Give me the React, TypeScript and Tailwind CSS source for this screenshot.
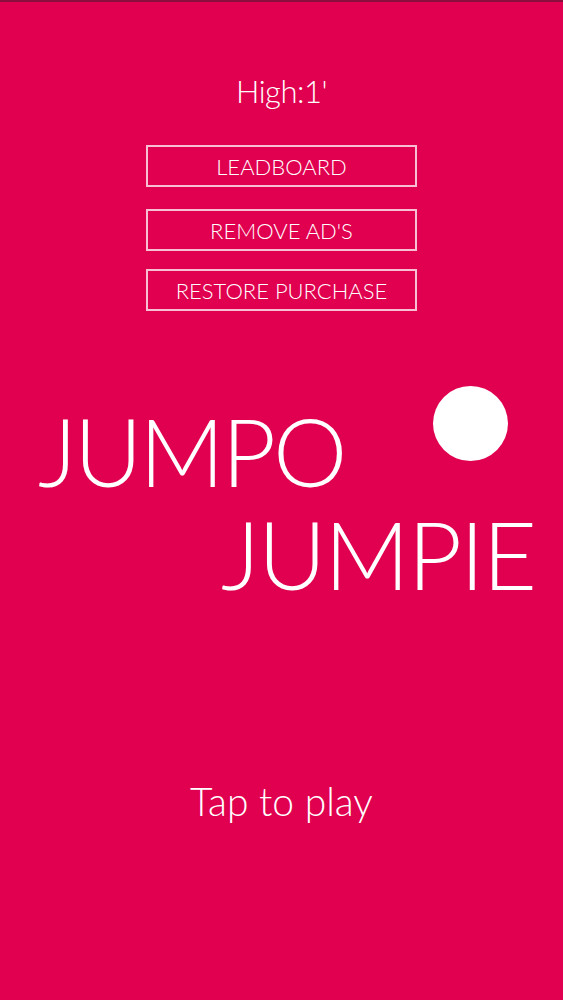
import React from 'react';

const font = { fontFamily: '"Lato", "Open Sans", sans-serif' };

const MenuButton: React.FC<{ label: string }> = ({ label }) => (
  <button className="w-[271px] h-[42px] border-2 border-white/75 flex items-center justify-center text-[22px] font-light text-white">
    {label}
  </button>
);

export default function App() {
  return (
    <div
      className="w-[563px] h-[1000px] bg-[#e1004f] border-t-2 border-[#8a0f3e] flex flex-col items-stretch overflow-hidden text-white"
      style={font}
    >
      {/* Header */}
      <div className="flex flex-col items-center pt-[74px]">
        <p className="text-[31px] font-light leading-none tracking-[-0.5px]">High:1'</p>
        <div className="flex flex-col items-center gap-[22px] mt-[38px]">
          <MenuButton label="LEADBOARD" />
          <div className="flex flex-col gap-[18px]">
            <MenuButton label="REMOVE AD'S" />
            <MenuButton label="RESTORE PURCHASE" />
          </div>
        </div>
      </div>

      {/* Title */}
      <div className="flex flex-col mt-[75px]">
        <div className="flex items-start">
          <span className="pl-[38px] text-[94px] font-light leading-none tracking-[-3px] mt-[18px]">JUMPO</span>
          <div className="ml-auto mr-[55px] w-[75px] h-[75px] rounded-full bg-white" />
        </div>
        <span className="pl-[221px] text-[94px] font-light leading-none tracking-[-2px] mt-[9px]">JUMPIE</span>
      </div>

      <p className="text-center text-[39px] font-light mt-[181px] leading-none">Tap to play</p>
    </div>
  );
}
